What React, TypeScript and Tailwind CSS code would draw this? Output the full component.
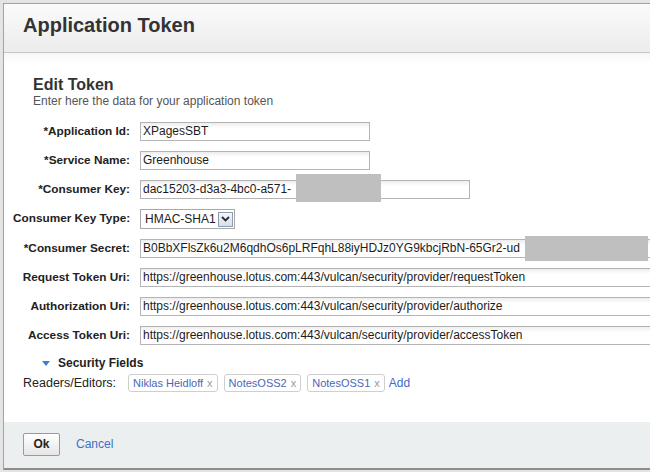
// App.tsx – Application Token dialog

type FieldProps = {
  label: string;
  value: string;
  width: string;
};

const font = { fontFamily: '"Liberation Sans", Arial, sans-serif' };

function Field({ label, value, width }: FieldProps) {
  return (
    <div className="flex h-[19px] items-center">
      <div className="w-[117px] shrink-0 whitespace-nowrap text-right text-[11.8px] font-bold text-[#222]">
        {label}
      </div>
      <div
        className={`ml-[10px] h-[19px] shrink-0 overflow-hidden whitespace-nowrap border border-[#b4b4b4] bg-linear-to-b from-[#ededed] to-white to-30% pl-[2px] text-[12px] leading-[17px] text-[#1c1c1c] ${width}`}
      >
        {value}
      </div>
    </div>
  );
}

function Tag({ name }: { name: string }) {
  return (
    <div className="flex h-[18px] items-center rounded-[3px] border border-[#cfcfcf] bg-white px-[4px] text-[11px] text-[#4a68b4]">
      {name}
      <span className="ml-[4px] text-[#9a9a9a]">x</span>
    </div>
  );
}

export default function App() {
  return (
    <div
      className="h-[472px] w-[650px] overflow-hidden bg-[#e4e4e4] pl-[3px] pt-[3px]"
      style={font}
    >
      <div className="w-[720px] border-l border-t border-[#a3a3a3] bg-white">
        {/* Header */}
        <div className="h-[49px] border-b border-[#c6c6c6] bg-linear-to-b from-[#fbfbfb] to-[#ececec] pl-[19px] pt-[9px]">
          <div className="text-[20px] font-bold leading-[24px] text-[#333]">
            Application Token
          </div>
        </div>

        {/* Body */}
        <div className="relative h-[369px] bg-linear-to-b from-[#f6f6f6] to-white to-[3%] pt-[22px]">
          <div className="ml-[29px]">
            <div className="text-[16px] font-bold leading-[19px] text-[#333]">
              Edit Token
            </div>
            <div className="text-[12px] leading-[14px] text-[#555]">
              Enter here the data for your application token
            </div>
          </div>

          <div className="ml-[9px] mt-[14px] flex flex-col gap-[10px]">
            <Field label="*Application Id:" value="XPagesSBT" width="w-[230px]" />
            <Field label="*Service Name:" value="Greenhouse" width="w-[230px]" />
            <div className="relative">
              <Field
                label="*Consumer Key:"
                value="dac15203-d3a3-4bc0-a571-"
                width="w-[330px]"
              />
              <div className="absolute left-[283px] top-[-6px] h-[28px] w-[85px] bg-[#bfbfbf]" />
            </div>
            <div className="flex h-[20px] items-center">
              <div className="w-[117px] shrink-0 whitespace-nowrap text-right text-[11.8px] font-bold text-[#222]">
                Consumer Key Type:
              </div>
              <div className="ml-[10px] flex h-[20px] w-[95px] items-center justify-between border border-[#a8a8a8] bg-white pl-[4px] pr-[1px] text-[12px] text-[#1c1c1c]">
                HMAC-SHA1
                <div className="flex h-[15px] w-[15px] items-center justify-center border border-[#8e9cb2] bg-linear-to-b from-[#f4f6fa] to-[#d9dee8]">
                  <svg width="9" height="6" viewBox="0 0 9 6">
                    <path d="M1 1 L4.5 4.5 L8 1" fill="none" stroke="#2b2b2b" strokeWidth="1.8" />
                  </svg>
                </div>
              </div>
            </div>
            <div className="relative">
              <Field
                label="*Consumer Secret:"
                value="B0BbXFlsZk6u2M6qdhOs6pLRFqhL88iyHDJz0YG9kbcjRbN-65Gr2-ud"
                width="w-[560px]"
              />
              <div className="absolute left-[512px] top-[-3px] h-[25px] w-[123px] bg-[#bfbfbf]" />
            </div>
            <Field
              label="Request Token Uri:"
              value="https://greenhouse.lotus.com:443/vulcan/security/provider/requestToken"
              width="w-[560px]"
            />
            <Field
              label="Authorization Uri:"
              value="https://greenhouse.lotus.com:443/vulcan/security/provider/authorize"
              width="w-[560px]"
            />
            <Field
              label="Access Token Uri:"
              value="https://greenhouse.lotus.com:443/vulcan/security/provider/accessToken"
              width="w-[560px]"
            />
          </div>

          <div className="ml-[38px] mt-[11px] flex items-center text-[12px] font-bold leading-[14px] text-[#222]">
            <svg width="8" height="5" viewBox="0 0 8 5" className="mr-[8px]">
              <path d="M0 0 L8 0 L4 5 Z" fill="#3d7fd0" />
            </svg>
            Security Fields
          </div>

          <div className="ml-[19px] mt-[4px] flex h-[18px] items-center text-[12.5px] text-[#222]">
            <div className="w-[105px]">Readers/Editors:</div>
            <div className="flex items-center gap-[6px]">
              <Tag name="Niklas Heidloff" />
              <Tag name="NotesOSS2" />
              <Tag name="NotesOSS1" />
            </div>
            <span className="ml-[4px] text-[12px] text-[#4169c9]">Add</span>
          </div>
        </div>

        {/* Footer */}
        <div className="flex h-[48px] items-center border-b-2 border-[#8c8c8c] bg-[#eceff0] pl-[19px] pb-[2px]">
          <button className="h-[23px] w-[37px] rounded-[2px] border border-[#9a9a9a] bg-linear-to-b from-white to-[#e6e6e6] text-[12px] font-bold text-[#222]">
            Ok
          </button>
          <span className="ml-[16px] text-[12px] text-[#3f6fc6]">Cancel</span>
        </div>
      </div>
    </div>
  );
}
